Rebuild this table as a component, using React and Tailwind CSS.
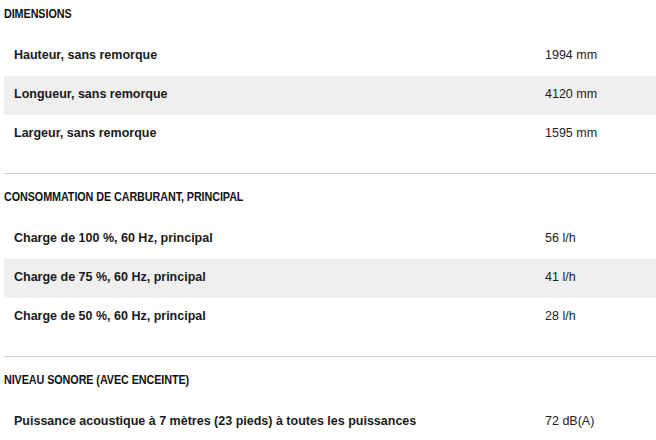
import React from "react";

const sections = [
  {
    title: "DIMENSIONS",
    rows: [
      ["Hauteur, sans remorque", "1994 mm"],
      ["Longueur, sans remorque", "4120 mm"],
      ["Largeur, sans remorque", "1595 mm"],
    ],
  },
  {
    title: "CONSOMMATION DE CARBURANT, PRINCIPAL",
    rows: [
      ["Charge de 100 %, 60 Hz, principal", "56 l/h"],
      ["Charge de 75 %, 60 Hz, principal", "41 l/h"],
      ["Charge de 50 %, 60 Hz, principal", "28 l/h"],
    ],
  },
  {
    title: "NIVEAU SONORE (AVEC ENCEINTE)",
    rows: [["Puissance acoustique à 7 mètres (23 pieds) à toutes les puissances", "72 dB(A)"]],
  },
];

export default function App() {
  return (
    <div className="w-[656px] h-[440px] overflow-hidden bg-white pl-[4px] text-[#1a1a1a] font-['Liberation_Sans',Arial,sans-serif]">
      {sections.map((s, i) => (
        <div key={i}>
          {i > 0 && <div className="mt-[19px] mb-[9px] h-px bg-[#d2d2d2]" />}
          <div className="h-[37px] pt-[6px] overflow-hidden">
            <div className="w-max origin-left scale-x-[0.83] whitespace-nowrap leading-[15px] text-[13px] font-bold text-[#111] tracking-[-0.1px]">
              {s.title}
            </div>
          </div>
          {s.rows.map((r, j) => (
            <div
              key={j}
              className={`grid grid-cols-[531px_1fr] h-[39px] items-center pb-[4px] pl-[10px] ${j % 2 === 1 ? "bg-[#efefef]" : ""}`}
            >
              <span className="text-[12.5px] font-bold leading-[16px] text-[#1a1a1a]">{r[0]}</span>
              <span className="text-[12.5px] leading-[16px] text-[#222]">{r[1]}</span>
            </div>
          ))}
        </div>
      ))}
    </div>
  );
}
